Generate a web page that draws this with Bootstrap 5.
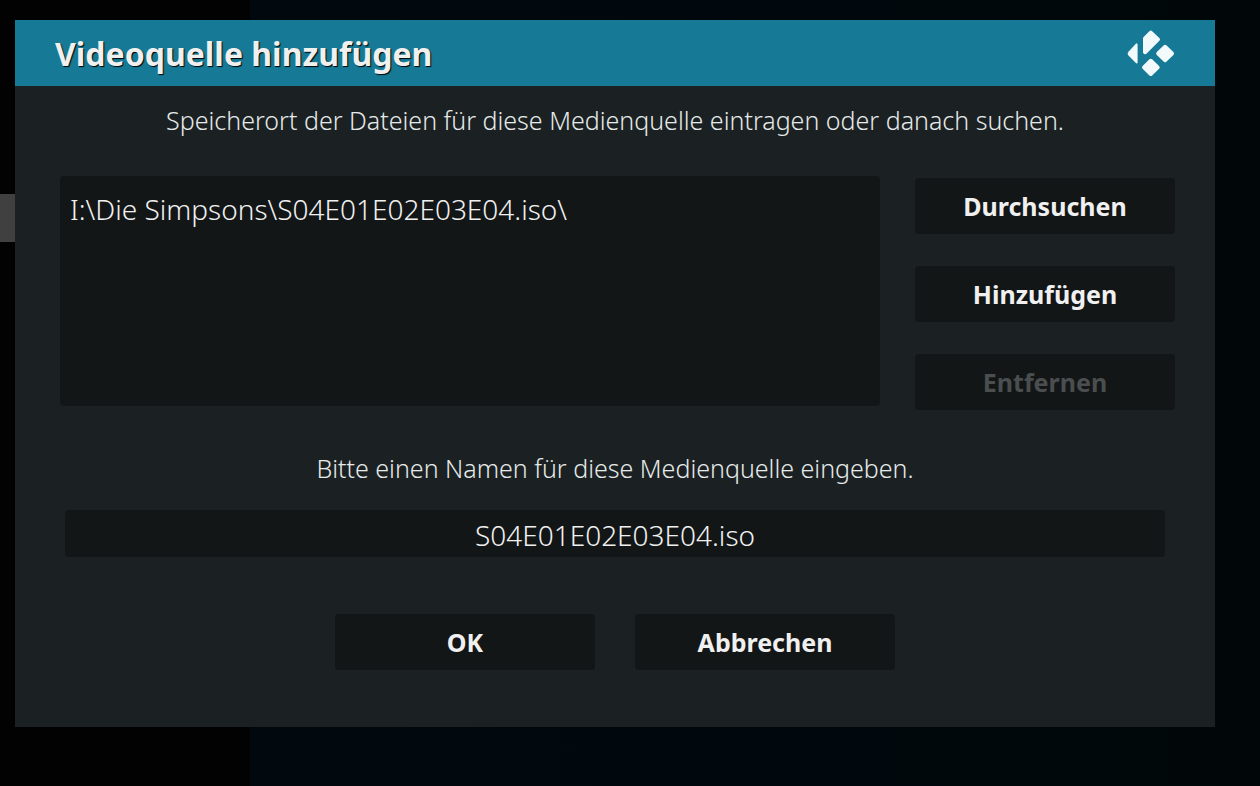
<!DOCTYPE html>
<html lang="de" data-bs-theme="dark">
<head>
<meta charset="utf-8">
<meta name="viewport" content="width=device-width, initial-scale=1">
<title>Videoquelle hinzufügen</title>
<link href="https://cdn.jsdelivr.net/npm/bootstrap@5.3.0/dist/css/bootstrap.min.css" rel="stylesheet">
<style>
  body {
    font-family: "Noto Sans", "Open Sans", sans-serif;
    background: linear-gradient(90deg, #020203 250px, #01080e 250px, #01080c 80%, #010708);
    color: #e6eaea;
  }
  .list-focus { left: 0; top: 194px; width: 15px; height: 48px; background: #404040; }
  .source-dialog { margin: 20px 45px 20px 15px; padding-bottom: 57px; background: #1b2122; }
  .dialog-title { height: 66px; padding: 0 40px; background: #167a96; }
  .dialog-title h1 { padding-top: 1px; font-size: 32px; line-height: 40px; font-weight: 700; color: #f0f0f0; text-shadow: 1px 1px 1px #000; }
  .hint { font-size: 25px; line-height: 32px; font-weight: 350; }
  .source-hint { margin: 18px 0 0; }
  .source-area { gap: 35px; padding: 0 40px 0 45px; margin: 40px 0 42px; }
  .path-list { height: 230px; background: #131617; border-radius: 4px; }
  .path-entry { padding: 13px 10px; font-size: 28px; line-height: 40px; font-weight: 350; color: #f0f0f0; background: transparent; border: 0; }
  .side-buttons { width: 260px; gap: 32px; padding-top: 2px; }
  .btn-dialog {
    --bs-btn-color: #f0f0f0; --bs-btn-bg: #131617; --bs-btn-border-width: 0;
    --bs-btn-hover-color: #fff; --bs-btn-hover-bg: #167a96;
    --bs-btn-active-color: #fff; --bs-btn-active-bg: #167a96;
    --bs-btn-disabled-color: #4b4e4f; --bs-btn-disabled-bg: #131617; --bs-btn-disabled-opacity: 1;
    --bs-btn-font-size: 25px; --bs-btn-font-weight: 700; --bs-btn-line-height: 32px;
    --bs-btn-padding-y: 12px; --bs-btn-border-radius: 4px;
  }
  .dialog-actions { gap: 40px; margin-top: 57px; }
  .dialog-actions .btn { width: 260px; }
  .name-row { padding: 0 50px; margin-top: 26px; }
  .name-row .form-control { height: 47px; padding: 3px 12px 0; border: 0; border-radius: 4px; background: #131617; color: #f0f0f0; font-size: 28px; line-height: 40px; font-weight: 350; }
</style>
</head>
<body>
<div class="list-focus position-absolute"></div>
<main class="source-dialog">
  <header class="dialog-title d-flex align-items-center justify-content-between">
    <h1 class="m-0">Videoquelle hinzufügen</h1>
    <svg width="48" height="48" viewBox="0 0 48 48" fill="#f2fafc" stroke="#f2fafc" stroke-width="4" stroke-linejoin="round" aria-hidden="true">
      <path d="M23.8 3.6 31 10.4 18 23.2V9.4ZM38 17.8 45 24.5 38 31.2 31.2 24.5ZM23.8 31.8 30.7 38.4 23.8 45 17 38.4Z"/>
      <path stroke-width="2" d="M9.6 15.4V33.4L2.2 25.8Q1.2 24.6 2.2 23.4Z"/>
    </svg>
  </header>
  <p class="hint source-hint text-center">Speicherort der Dateien für diese Medienquelle eintragen oder danach suchen.</p>
  <section class="source-area d-flex align-items-start">
    <ul class="path-list list-group flex-grow-1">
      <li class="path-entry list-group-item">I:\Die Simpsons\S04E01E02E03E04.iso\</li>
    </ul>
    <div class="side-buttons d-flex flex-column flex-shrink-0">
      <button type="button" class="btn btn-dialog">Durchsuchen</button>
      <button type="button" class="btn btn-dialog">Hinzufügen</button>
      <button type="button" class="btn btn-dialog" disabled>Entfernen</button>
    </div>
  </section>
  <form>
    <label for="source-name" class="hint d-block text-center">Bitte einen Namen für diese Medienquelle eingeben.</label>
    <div class="name-row">
      <input id="source-name" type="text" class="form-control text-center" value="S04E01E02E03E04.iso">
    </div>
    <div class="dialog-actions d-flex justify-content-center">
      <button type="submit" class="btn btn-dialog">OK</button>
      <button type="button" class="btn btn-dialog">Abbrechen</button>
    </div>
  </form>
</main>
<script src="https://cdn.jsdelivr.net/npm/bootstrap@5.3.0/dist/js/bootstrap.bundle.min.js"></script>
</body>
</html>
